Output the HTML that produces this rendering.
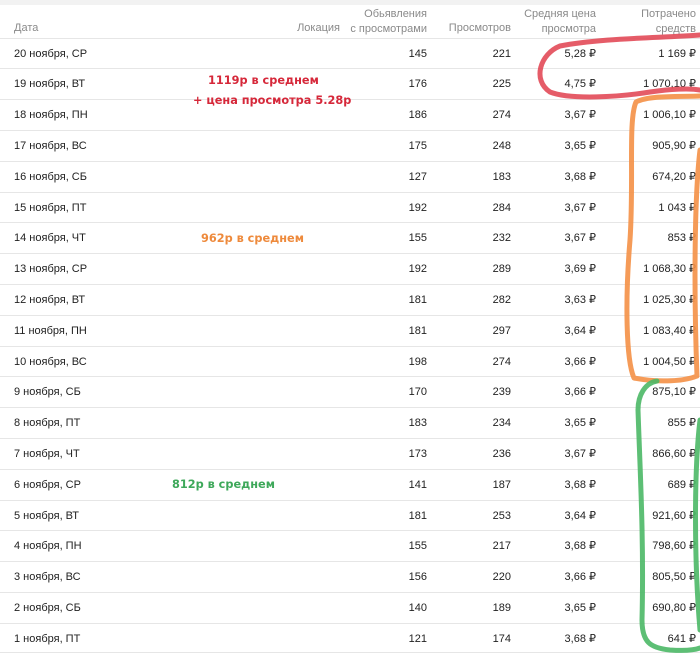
<!DOCTYPE html>
<html><head><meta charset="utf-8"><style>
body{margin:0;width:700px;height:663px;background:#fff;position:relative;overflow:hidden;font-family:"Liberation Sans",sans-serif;font-size:11px;color:#222}
.top{position:absolute;left:0;top:0;width:700px;height:5px;background:#f2f2f2}
.h{position:absolute;color:#8a8a8a;font-size:11px;line-height:15px;text-align:right}
.r{position:absolute;left:0;width:700px;height:30.8px;border-top:1px solid #e6e6e6;box-sizing:border-box}
.r span{position:absolute;top:8px;line-height:14px;white-space:nowrap}
.d{left:14px}.a{right:273px}.b{right:189px}.c{right:104px}.e{right:4px}
.n{position:absolute;font-weight:bold;font-size:11.3px;font-family:"DejaVu Sans",sans-serif;white-space:nowrap}
svg{position:absolute;left:0;top:0}
</style></head><body>
<div class="top"></div>
<div class="h" style="left:14px;top:21px;text-align:left">Дата</div>
<div class="h" style="right:360px;top:21px">Локация</div>
<div class="h" style="right:273px;top:7px">Обьявления<br>с просмотрами</div>
<div class="h" style="right:189px;top:21px">Просмотров</div>
<div class="h" style="right:104px;top:7px">Средняя цена<br>просмотра</div>
<div class="h" style="right:4px;top:7px">Потрачено<br>средств</div>

<div class="r" style="top:37.5px"><span class="d">20 ноября, СР</span><span class="a">145</span><span class="b">221</span><span class="c">5,28 ₽</span><span class="e">1 169 ₽</span></div>
<div class="r" style="top:68.3px"><span class="d">19 ноября, ВТ</span><span class="a">176</span><span class="b">225</span><span class="c">4,75 ₽</span><span class="e">1 070,10 ₽</span></div>
<div class="r" style="top:99.1px"><span class="d">18 ноября, ПН</span><span class="a">186</span><span class="b">274</span><span class="c">3,67 ₽</span><span class="e">1 006,10 ₽</span></div>
<div class="r" style="top:129.9px"><span class="d">17 ноября, ВС</span><span class="a">175</span><span class="b">248</span><span class="c">3,65 ₽</span><span class="e">905,90 ₽</span></div>
<div class="r" style="top:160.7px"><span class="d">16 ноября, СБ</span><span class="a">127</span><span class="b">183</span><span class="c">3,68 ₽</span><span class="e">674,20 ₽</span></div>
<div class="r" style="top:191.5px"><span class="d">15 ноября, ПТ</span><span class="a">192</span><span class="b">284</span><span class="c">3,67 ₽</span><span class="e">1 043 ₽</span></div>
<div class="r" style="top:222.3px"><span class="d">14 ноября, ЧТ</span><span class="a">155</span><span class="b">232</span><span class="c">3,67 ₽</span><span class="e">853 ₽</span></div>
<div class="r" style="top:253.1px"><span class="d">13 ноября, СР</span><span class="a">192</span><span class="b">289</span><span class="c">3,69 ₽</span><span class="e">1 068,30 ₽</span></div>
<div class="r" style="top:283.9px"><span class="d">12 ноября, ВТ</span><span class="a">181</span><span class="b">282</span><span class="c">3,63 ₽</span><span class="e">1 025,30 ₽</span></div>
<div class="r" style="top:314.7px"><span class="d">11 ноября, ПН</span><span class="a">181</span><span class="b">297</span><span class="c">3,64 ₽</span><span class="e">1 083,40 ₽</span></div>
<div class="r" style="top:345.5px"><span class="d">10 ноября, ВС</span><span class="a">198</span><span class="b">274</span><span class="c">3,66 ₽</span><span class="e">1 004,50 ₽</span></div>
<div class="r" style="top:376.3px"><span class="d">9 ноября, СБ</span><span class="a">170</span><span class="b">239</span><span class="c">3,66 ₽</span><span class="e">875,10 ₽</span></div>
<div class="r" style="top:407.1px"><span class="d">8 ноября, ПТ</span><span class="a">183</span><span class="b">234</span><span class="c">3,65 ₽</span><span class="e">855 ₽</span></div>
<div class="r" style="top:437.9px"><span class="d">7 ноября, ЧТ</span><span class="a">173</span><span class="b">236</span><span class="c">3,67 ₽</span><span class="e">866,60 ₽</span></div>
<div class="r" style="top:468.7px"><span class="d">6 ноября, СР</span><span class="a">141</span><span class="b">187</span><span class="c">3,68 ₽</span><span class="e">689 ₽</span></div>
<div class="r" style="top:499.5px"><span class="d">5 ноября, ВТ</span><span class="a">181</span><span class="b">253</span><span class="c">3,64 ₽</span><span class="e">921,60 ₽</span></div>
<div class="r" style="top:530.3px"><span class="d">4 ноября, ПН</span><span class="a">155</span><span class="b">217</span><span class="c">3,68 ₽</span><span class="e">798,60 ₽</span></div>
<div class="r" style="top:561.1px"><span class="d">3 ноября, ВС</span><span class="a">156</span><span class="b">220</span><span class="c">3,66 ₽</span><span class="e">805,50 ₽</span></div>
<div class="r" style="top:591.9px"><span class="d">2 ноября, СБ</span><span class="a">140</span><span class="b">189</span><span class="c">3,65 ₽</span><span class="e">690,80 ₽</span></div>
<div class="r" style="top:622.7px;border-bottom:1px solid #e6e6e6"><span class="d">1 ноября, ПТ</span><span class="a">121</span><span class="b">174</span><span class="c">3,68 ₽</span><span class="e">641 ₽</span></div>

<div class="n" style="left:208px;top:74px;color:#d6283a">1119р в среднем</div>
<div class="n" style="left:193px;top:94px;color:#d6283a">+ цена просмотра 5.28р</div>
<div class="n" style="left:201px;top:232px;color:#ee8a3c">962р в среднем</div>
<div class="n" style="left:172px;top:478px;color:#3ea85a">812р в среднем</div>

<svg width="700" height="663" fill="none" stroke-linecap="round" stroke-linejoin="round" stroke-width="5">
<path d="M700 35 C660 38 600 38 560 46 C540 54 532 80 550 92 C570 100 620 97 650 92 C670 89 690 88 700 90" stroke="#e0404e" opacity="0.85"/>
<path d="M700 96 C680 97 650 95 636 102 C628 120 634 180 630 240 C625 300 626 360 634 378 C660 383 685 381 697 376 M700 150 C694 200 694 300 697 376" stroke="#f49046" opacity="0.9"/>
<path d="M657 381 C645 383 638 395 638 410 C640 470 644 540 642 620 C642 642 650 648 670 650 C685 651 695 650 700 648 M700 420 C694 470 694 560 700 630" stroke="#4bb866" opacity="0.9"/>
</svg>
</body></html>
